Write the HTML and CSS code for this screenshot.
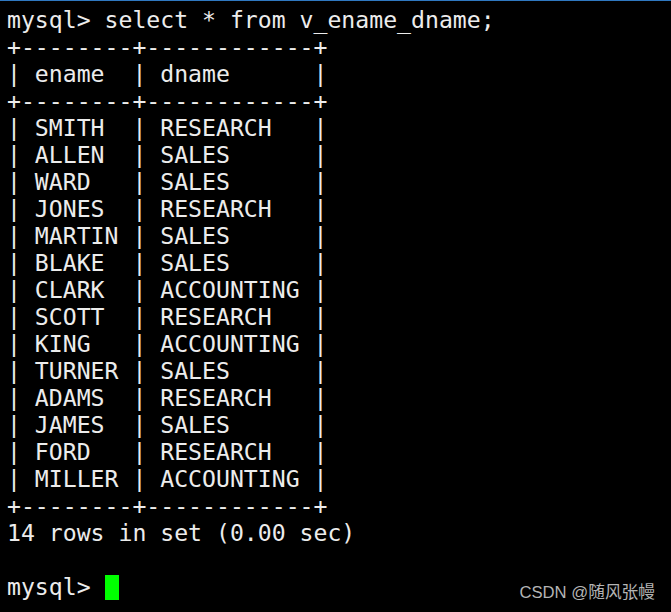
FILE: index.html
```html
<!DOCTYPE html>
<html lang="zh">
<head>
<meta charset="utf-8">
<title>mysql</title>
<link rel="stylesheet" href="styles.css">
</head>
<body>
<div class="terminal">
<pre class="screen">mysql&gt; select * from v_ename_dname;
+--------+------------+
| ename  | dname      |
+--------+------------+
| SMITH  | RESEARCH   |
| ALLEN  | SALES      |
| WARD   | SALES      |
| JONES  | RESEARCH   |
| MARTIN | SALES      |
| BLAKE  | SALES      |
| CLARK  | ACCOUNTING |
| SCOTT  | RESEARCH   |
| KING   | ACCOUNTING |
| TURNER | SALES      |
| ADAMS  | RESEARCH   |
| JAMES  | SALES      |
| FORD   | RESEARCH   |
| MILLER | ACCOUNTING |
+--------+------------+
14 rows in set (0.00 sec)

mysql&gt; <span class="cursor"> </span></pre>
<div class="watermark">CSDN @随风张幔</div>
</div>
</body>
</html>
```
FILE: styles.css
```css
html, body {
  margin: 0;
  padding: 0;
  background: #000;
}
.terminal {
  position: relative;
  width: 671px;
  height: 612px;
  box-sizing: border-box;
  border-top: 1px solid #2f78c0;
  background: #000;
  overflow: hidden;
}
.screen {
  margin: 0;
  padding: 6px 0 0 7px;
  font-family: "DejaVu Sans Mono", monospace;
  font-size: 23.15px;
  line-height: 27px;
  color: #ececec;
  white-space: pre;
}
.cursor {
  display: inline-block;
  width: 14px;
  height: 25px;
  background: #00ff00;
  vertical-align: -1px;
}
.watermark {
  position: absolute;
  right: 16px;
  bottom: 9px;
  font-family: "Liberation Sans", "Noto Sans CJK SC", sans-serif;
  font-size: 16.7px;
  color: #b4b4b4;
}
```
